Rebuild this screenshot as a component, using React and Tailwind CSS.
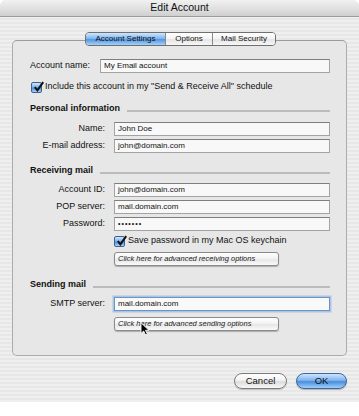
import React from "react";

const Check = ({ className }) => (
  <span
    className={`relative block h-[11px] w-[11px] shrink-0 rounded-[2px] border border-[#3d5f91] bg-[linear-gradient(#d3e8fc,#7db2ec_45%,#4d8ddb_55%,#a8d3f8)] ${className}`}
  >
    <svg viewBox="0 0 12 12" className="absolute left-[1px] top-[-2px] h-[12px] w-[12px]">
      <path d="M1.8 6.2 L4.4 9.4 L10.2 1.2" fill="none" stroke="#111" strokeWidth="2" />
    </svg>
  </span>
);

const Field = ({ value }) => (
  <div className="flex h-[14px] items-center border border-[#a3a3a3] border-t-[#7e7e7e] bg-[#f8f8f8] pl-[3px] text-[8px] text-[#111]">
    {value}
  </div>
);

const Row = ({ label, children, className }) => (
  <div className={`flex items-center ${className}`}>
    <span className="w-[75px] text-right text-[9px] text-[#111]">{label}</span>
    <div className="ml-[9px] w-[216px]">{children}</div>
  </div>
);

const Section = ({ title, className }) => (
  <div className={`flex h-[12px] items-center ${className}`}>
    <span className="text-[9px] font-bold text-[#111]">{title}</span>
    <span className="ml-[7px] mt-[4px] h-[2px] flex-1 bg-[#bbbbbb]" />
  </div>
);

const SmallButton = ({ children }) => (
  <div className="flex h-[14px] w-[165px] items-center rounded-[3px] border border-[#8a8a8a] bg-[linear-gradient(#ffffff,#f1f1f1_50%,#e6e6e6_55%,#fafafa)] pl-[3px] text-[7.5px] italic text-[#222] shadow-[0_1px_1px_rgba(0,0,0,0.25)]">
    {children}
  </div>
);

export default function App() {
  return (
    <div className="relative h-[416px] w-[359px] bg-white font-['Liberation_Sans',Arial,sans-serif]">
      <div className="flex h-[402px] flex-col rounded-t-[6px] bg-[repeating-linear-gradient(180deg,#efefef_0px,#efefef_2px,#e7e7e7_2px,#e7e7e7_4px)]">
        <div className="flex h-[17px] items-center justify-center rounded-t-[6px] border-b border-[#9a9a9a] bg-[linear-gradient(#f1f1f1,#dedede_60%,#cfcfcf)] text-[10.5px] text-[#111]">
          Edit Account
        </div>

        <div className="relative z-10 mt-[15px] flex justify-center pl-[2px]">
          <div className="flex h-[14px] w-[191px] overflow-hidden rounded-[4px] border border-[#6f6f6f] text-[8px] text-[#111]">
            <span className="flex w-[79px] items-center justify-center bg-[linear-gradient(#cfe6fd,#83b8ef_45%,#5596e0_55%,#a4d2f8)]">
              Account Settings
            </span>
            <span className="flex w-[47px] items-center justify-center border-l border-[#8a8a8a] bg-[linear-gradient(#ffffff,#f3f3f3_50%,#e5e5e5_55%,#f7f7f7)]">
              Options
            </span>
            <span className="flex w-[63px] items-center justify-center border-l border-[#8a8a8a] bg-[linear-gradient(#ffffff,#f3f3f3_50%,#e5e5e5_55%,#f7f7f7)]">
              Mail Security
            </span>
          </div>
        </div>

        <div className="mx-[12px] -mt-[6px] flex h-[316px] flex-col rounded-[5px] border border-[#acacac] border-t-[#9c9c9c] bg-[#e7e7e7] pl-[17px] pr-[16px] pt-[18px]">
          <div className="flex items-center">
            <span className="w-[70px] text-[9px] text-[#111]">Account name:</span>
            <div className="w-[230px]">
              <Field value="My Email account" />
            </div>
          </div>

          <div className="mt-[8px] flex h-[12px] items-center">
            <Check className="ml-[1px]" />
            <span className="ml-[3px] text-[9px] text-[#111]">
              Include this account in my "Send &amp; Receive All" schedule
            </span>
          </div>

          <Section title="Personal information" className="mt-[10px]" />
          <Row label="Name:" className="mt-[7px]">
            <Field value="John Doe" />
          </Row>
          <Row label="E-mail address:" className="mt-[3px]">
            <Field value="john@domain.com" />
          </Row>

          <Section title="Receiving mail" className="mt-[12px]" />
          <Row label="Account ID:" className="mt-[6px]">
            <Field value="john@domain.com" />
          </Row>
          <Row label="POP server:" className="mt-[3px]">
            <Field value="mail.domain.com" />
          </Row>
          <Row label="Password:" className="mt-[3px]">
            <Field value={<span className="text-[7px] tracking-[1px]">•••••••</span>} />
          </Row>
          <div className="ml-[84px] mt-[4px] flex h-[12px] items-center">
            <Check />
            <span className="ml-[3px] text-[9px] text-[#111]">Save password in my Mac OS keychain</span>
          </div>
          <div className="ml-[84px] mt-[5px]">
            <SmallButton>Click here for advanced receiving options</SmallButton>
          </div>

          <Section title="Sending mail" className="mt-[13px]" />
          <Row label="SMTP server:" className="mt-[6px]">
            <div className="flex h-[14px] items-center border border-[#6f94c4] bg-[#f9f9f9] pl-[3px] text-[8px] text-[#111] shadow-[0_0_0_1.5px_#a9c5e6]">
              mail.domain.com
            </div>
          </Row>
          <div className="ml-[84px] mt-[6px]">
            <SmallButton>Click here for advanced sending options</SmallButton>
          </div>
        </div>

        <div className="mt-[17px] flex justify-end gap-[9px] pr-[12px]">
          <div className="flex h-[16px] w-[53px] items-center justify-center rounded-full border border-[#7b7b7b] bg-[linear-gradient(#ffffff,#f2f2f2_45%,#dcdcdc_55%,#f8f8f8)] text-[9.5px] text-[#111] shadow-[0_1px_1px_rgba(0,0,0,0.2)]">
            Cancel
          </div>
          <div className="flex h-[16px] w-[51px] items-center justify-center rounded-full border border-[#3f649b] bg-[linear-gradient(#cde5fd,#7fb4ee_45%,#4a8ddd_55%,#9fd0fa)] text-[9.5px] text-[#111] shadow-[0_1px_1px_rgba(0,0,0,0.25)]">
            OK
          </div>
        </div>
      </div>

      <svg viewBox="0 0 10 14" className="absolute left-[140px] top-[322px] h-[14px] w-[10px]">
        <path
          d="M1 0.8 L1 11.5 L3.6 9 L5.6 13 L7.4 12.1 L5.5 8.3 L9 8.3 Z"
          fill="#000"
          stroke="#fff"
          strokeWidth="0.9"
          strokeLinejoin="round"
        />
      </svg>
    </div>
  );
}
